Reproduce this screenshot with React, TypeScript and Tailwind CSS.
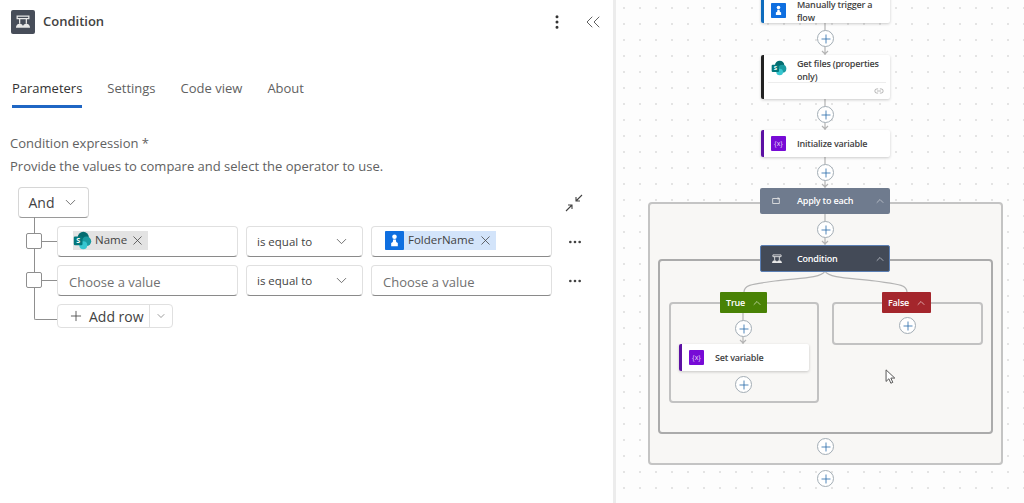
import { ChevronDown, ChevronUp, ChevronsLeft, EllipsisVertical, Ellipsis, Plus, X, Link2 } from 'lucide-react';

// small glyphs used in both the panel and the canvas
function ConditionGlyph({ className }: { className?: string }) {
  return (
    <svg viewBox="0 0 24 24" className={className} fill="none" stroke="#e8e8e8" strokeWidth="1.5">
      <path d="M5 5h14v3H5zM8 8v6M16 8v6" />
      <path d="M3.500 19c0-3.200 2-5 4.500-5s4.500 1.800 4.500 5zM11.500 19c0-3.200 2-5 4.500-5s4.500 1.800 4.500 5z" fill="#e8e8e8" stroke="none" />
    </svg>
  );
}

function SharePointIcon({ className }: { className?: string }) {
  return (
    <svg viewBox="0 0 24 24" className={className}>
      <circle cx="13" cy="8" r="7" fill="#036c70" />
      <circle cx="17" cy="13" r="6" fill="#1a9ba1" />
      <circle cx="13" cy="18" r="5" fill="#37c6d0" />
      <rect x="1" y="7" width="11" height="11" rx="1.5" fill="#03787c" />
      <text x="6.5" y="15.5" fontSize="9" fontWeight="700" textAnchor="middle" fill="#fff" fontFamily="Open Sans, sans-serif">S</text>
    </svg>
  );
}

function TriggerIcon({ className }: { className?: string }) {
  return (
    <svg viewBox="0 0 20 20" className={className}>
      <rect width="20" height="20" rx="1" fill="#0f6fe0" />
      <circle cx="10" cy="6" r="2.4" fill="#fff" />
      <path d="M8.600 9h2.800l.4 2.600 1.700 1v3.400H6.500v-3.400l1.700-1z" fill="#fff" />
    </svg>
  );
}

function VariableIcon() {
  return (
    <span className="flex h-[15px] w-[15px] shrink-0 items-center justify-center rounded-[1px] bg-[#770bd6] text-[7px] font-normal leading-none tracking-normal text-[#e6d5f7]">
      {'{x}'}
    </span>
  );
}

function PlusButton({ className }: { className: string }) {
  return (
    <span className={`absolute flex h-[17px] w-[17px] items-center justify-center rounded-full border border-[#a3adb5] bg-white ${className}`}>
      <Plus className="h-[14px] w-[14px] text-[#2b6cab]" strokeWidth={1.4} />
    </span>
  );
}

function Field({ children, className }: { children?: React.ReactNode; className: string }) {
  return (
    <div className={`flex h-[31px] items-center rounded-[4px] border border-[#e0e0e0] border-b-[#8a8a8a] bg-white ${className}`}>
      {children}
    </div>
  );
}

function OperatorSelect() {
  return (
    <Field className="w-[117px] justify-between pl-[10px] pr-[12px]">
      <span className="text-[11.5px] text-[#424242]">is equal to</span>
      <ChevronDown className="h-[17px] w-[17px] text-[#616161]" strokeWidth={1.25} />
    </Field>
  );
}

function ConditionPanel() {
  return (
    <div className="flex h-full w-[613px] shrink-0 flex-col bg-white">
      <div className="flex h-[44px] items-center pl-[11px] pr-[8px]">
        <span className="flex h-[24px] w-[24px] items-center justify-center rounded-[2px] bg-[#474d59]">
          <ConditionGlyph className="h-[20px] w-[20px]" />
        </span>
        <span className="ml-[8px] text-[13px] font-semibold text-[#424242]">Condition</span>
        <div className="ml-auto flex items-center gap-[15px]">
          <EllipsisVertical className="h-[18px] w-[18px] text-[#333333]" strokeWidth={2} />
          <ChevronsLeft className="h-[24px] w-[24px] text-[#616161]" strokeWidth={1} />
        </div>
      </div>

      <div className="mt-[34px] flex gap-[25px] pl-[12px] text-[13px] leading-[20px] text-[#616161]">
        <div className="border-b-[3px] border-[#1f66c4] pb-[7px] font-medium text-[#333333]">Parameters</div>
        <div>Settings</div>
        <div>Code view</div>
        <div>About</div>
      </div>

      <div className="mt-[25px] pl-[10px] text-[13px] text-[#616161]">
        <div className="leading-[20px]">Condition expression *</div>
        <div className="mt-[3px] leading-[20px]">Provide the values to compare and select the operator to use.</div>
      </div>

      <div className="relative mt-[11px] pl-[18px]">
        <div className="flex items-center justify-between pr-[29px]">
          <div className="flex h-[31px] w-[71px] items-center justify-center gap-[7px] rounded-[4px] border border-[#d6d6d6] border-b-[#9a9a9a] bg-white text-[14px] text-[#424242]">
            And
            <ChevronDown className="h-[17px] w-[17px] text-[#616161]" strokeWidth={1.25} />
          </div>
          <svg viewBox="0 0 20 20" className="h-[20px] w-[20px] text-[#424242]" fill="none" stroke="currentColor" strokeWidth="1.1">
            <path d="M18 2l-6 6M12 4v4h4M2 18l6-6M4 12h4v4" />
          </svg>
        </div>

        {/* tree lines that join the rows */}
        <div className="absolute left-[34px] top-[30px] h-[103px] w-[23px] rounded-bl-[2px] border-b border-l border-[#8f8f8f]" />

        <div className="mt-[8px] flex flex-col gap-[8px] pl-[39px]">
          <div className="relative flex items-center gap-[8px]">
            <span className="absolute left-[-31px] top-[7px] h-[16px] w-[16px] rounded-[2px] border border-[#8f8f8f] bg-white" />
            <span className="absolute left-[-15px] top-[15px] h-px w-[15px] bg-[#8f8f8f]" />
            <Field className="w-[181px] pl-[15px]">
              <span className="mb-[3px] flex h-[19px] items-center gap-[3px] bg-[#e3e3e3] pr-[3px] text-[11.5px] text-[#424242]">
                <SharePointIcon className="h-[19px] w-[19px]" />
                Name
                <X className="h-[15px] w-[15px]" strokeWidth={1.25} />
              </span>
            </Field>
            <OperatorSelect />
            <Field className="w-[181px] pl-[13px]">
              <span className="mb-[3px] flex h-[19px] items-center gap-[4px] bg-[#d3e4fa] pr-[3px] text-[11.5px] text-[#424242]">
                <TriggerIcon className="h-[19px] w-[19px]" />
                FolderName
                <X className="h-[15px] w-[15px]" strokeWidth={1.25} />
              </span>
            </Field>
            <Ellipsis className="ml-[7px] h-[16px] w-[16px] text-[#424242]" strokeWidth={2} />
          </div>
          <div className="relative flex items-center gap-[8px]">
            <span className="absolute left-[-31px] top-[7px] h-[16px] w-[16px] rounded-[2px] border border-[#8f8f8f] bg-white" />
            <span className="absolute left-[-15px] top-[15px] h-px w-[15px] bg-[#8f8f8f]" />
            <Field className="w-[181px] pl-[11px]">
              <span className="pt-[5px] text-[13px] text-[#707070]">Choose a value</span>
            </Field>
            <OperatorSelect />
            <Field className="w-[181px] pl-[11px]">
              <span className="pt-[5px] text-[13px] text-[#707070]">Choose a value</span>
            </Field>
            <Ellipsis className="ml-[7px] h-[16px] w-[16px] text-[#424242]" strokeWidth={2} />
          </div>
          <div className="relative flex h-[24px] w-[116px] items-center rounded-[4px] border border-[#e0e0e0] bg-white">
            <div className="flex h-full w-[92px] items-center gap-[5px] border-r border-[#e0e0e0] pl-[10px] text-[14px] text-[#424242]">
              <Plus className="h-[16px] w-[16px] shrink-0" strokeWidth={1.25} />
              <span className="whitespace-nowrap">Add row</span>
            </div>
            <ChevronDown className="mx-auto h-[12px] w-[12px] text-[#616161]" strokeWidth={1.25} />
          </div>
        </div>
      </div>
    </div>
  );
}

function FlowCanvas() {
  return (
    <div className="relative h-full flex-1 overflow-hidden bg-[#fdfdfd] bg-[radial-gradient(circle,#e4e4e4_1px,transparent_1.2px)] bg-[size:16px_16px] text-[9px] font-semibold tracking-[-0.2px] text-[#424242]">
      {/* scope boxes */}
      <div className="absolute left-[32px] top-[202px] h-[263px] w-[355px] rounded-[4px] border-2 border-[#c4c4c4] bg-[#f8f7f5]" />
      <div className="absolute left-[42px] top-[259px] h-[175px] w-[335px] rounded-[4px] border-2 border-[#ababab] bg-[#f8f7f5]" />
      <div className="absolute left-[53px] top-[302px] h-[101px] w-[150px] rounded-[4px] border-2 border-[#c2c2c2]" />
      <div className="absolute left-[216px] top-[302px] h-[43px] w-[151px] rounded-[4px] border-2 border-[#c2c2c2]" />

      {/* edges between the nodes */}
      <svg className="absolute left-0 top-0 h-[503px] w-[408px]" fill="none" stroke="#b4b4b4" strokeWidth="1.2">
        <path d="M209 23v32M206 51l3 3 3-3M209 98v32M206 126l3 3 3-3M209 156v32M206 184l3 3 3-3M209 214v31M206 241l3 3 3-3" />
        <path d="M209 271c-4 8-30 7-50 10s-31 3-31 11" />
        <path d="M209 271c4 8 30 7 50 10s32 3 32 11" />
        <path d="M127 313v31M124 340l3 3 3-3" />
      </svg>

      {/* nodes */}
      <div className="absolute left-[145px] top-[-20px] flex h-[43px] w-[129px] rounded-[2px] border-l-[3px] border-[#0f6cbd] bg-white pl-[7px] shadow-[0_1px_3px_rgba(0,0,0,0.2)]">
        <TriggerIcon className="mt-[23px] h-[15px] w-[15px] shrink-0" />
        <div className="ml-[11px] mt-[18px] w-[90px] leading-[13px]">Manually trigger a flow</div>
      </div>

      <div className="absolute left-[145px] top-[55px] h-[44px] w-[129px] rounded-[2px] border-l-[3px] border-[#222222] bg-white shadow-[0_1px_3px_rgba(0,0,0,0.2)]">
        <div className="flex h-[27px] pl-[7px] pt-[2px]">
          <SharePointIcon className="mt-[3px] h-[16px] w-[16px] shrink-0" />
          <div className="ml-[10px] w-[90px] leading-[13px]">Get files (properties only)</div>
        </div>
        <div className="mx-[4px] flex h-[16px] items-center justify-end border-t border-[#ededed] pr-[2px]">
          <Link2 className="h-[10px] w-[10px] text-[#777777]" strokeWidth={1.25} />
        </div>
      </div>

      <div className="absolute left-[145px] top-[130px] flex h-[27px] w-[129px] items-center rounded-[2px] border-l-[3px] border-[#5c10a3] bg-white pl-[7px] shadow-[0_1px_3px_rgba(0,0,0,0.2)]">
        <VariableIcon />
        <span className="ml-[11px]">Initialize variable</span>
      </div>

      <div className="absolute left-[144px] top-[188px] flex h-[26px] w-[130px] items-center rounded-[2px] bg-[#6f7b8e] pl-[11px] pr-[4px] text-white">
        <svg viewBox="0 0 12 12" className="h-[10px] w-[10px] shrink-0" fill="none" stroke="#e8e8e8" strokeWidth="1">
          <path d="M2 3h8v6H2zM8 2l2 1-2 1" />
        </svg>
        <span className="ml-[16px]">Apply to each</span>
        <ChevronUp className="ml-auto h-[12px] w-[12px] text-[#c8ccd4]" strokeWidth={1.5} />
      </div>

      <div className="absolute left-[144px] top-[245px] flex h-[27px] w-[130px] items-center rounded-[2px] border-[1.5px] border-[#5b7fb4] bg-[#434a57] pl-[9px] pr-[3px] text-white">
        <ConditionGlyph className="h-[14px] w-[14px] shrink-0" />
        <span className="ml-[13px]">Condition</span>
        <ChevronUp className="ml-auto h-[12px] w-[12px] text-[#c8ccd4]" strokeWidth={1.5} />
      </div>

      <div className="absolute left-[104px] top-[292px] flex h-[21px] w-[47px] items-center rounded-[1px] bg-[#498205] pl-[6px] pr-[4px] text-white">
        True
        <ChevronUp className="ml-auto h-[12px] w-[12px] text-[#d6e6c2]" strokeWidth={1.5} />
      </div>

      <div className="absolute left-[266px] top-[292px] flex h-[21px] w-[49px] items-center rounded-[1px] bg-[#a4262c] pl-[6px] pr-[4px] text-white">
        False
        <ChevronUp className="ml-auto h-[12px] w-[12px] text-[#f0d0d0]" strokeWidth={1.5} />
      </div>

      <div className="absolute left-[63px] top-[344px] flex h-[27px] w-[130px] items-center rounded-[2px] border-l-[3px] border-[#5c10a3] bg-white pl-[7px] shadow-[0_1px_3px_rgba(0,0,0,0.2)]">
        <VariableIcon />
        <span className="ml-[11px]">Set variable</span>
      </div>

      <PlusButton className="left-[201px] top-[30px]" />
      <PlusButton className="left-[201px] top-[106px]" />
      <PlusButton className="left-[201px] top-[164px]" />
      <PlusButton className="left-[201px] top-[221px]" />
      <PlusButton className="left-[119px] top-[320px]" />
      <PlusButton className="left-[283px] top-[317px]" />
      <PlusButton className="left-[119px] top-[376px]" />
      <PlusButton className="left-[201px] top-[438px]" />
      <PlusButton className="left-[201px] top-[470px]" />

      {/* mouse pointer in the shot */}
      <svg viewBox="0 0 12 18" className="absolute left-[269px] top-[369px] h-[16px] w-[11px]" fill="#ffffff" stroke="#555555" strokeWidth="1.1">
        <path d="M1 1v13l3.200-3 2.200 5 2.200-1-2.200-4.800h4.400z" />
      </svg>
    </div>
  );
}

export default function App() {
  return (
    <div className="flex h-[503px] w-[1024px] overflow-hidden bg-white font-['Open_Sans',sans-serif]">
      <ConditionPanel />
      <div className="h-full w-[3px] shrink-0 bg-[#ececec]" />
      <FlowCanvas />
    </div>
  );
}
